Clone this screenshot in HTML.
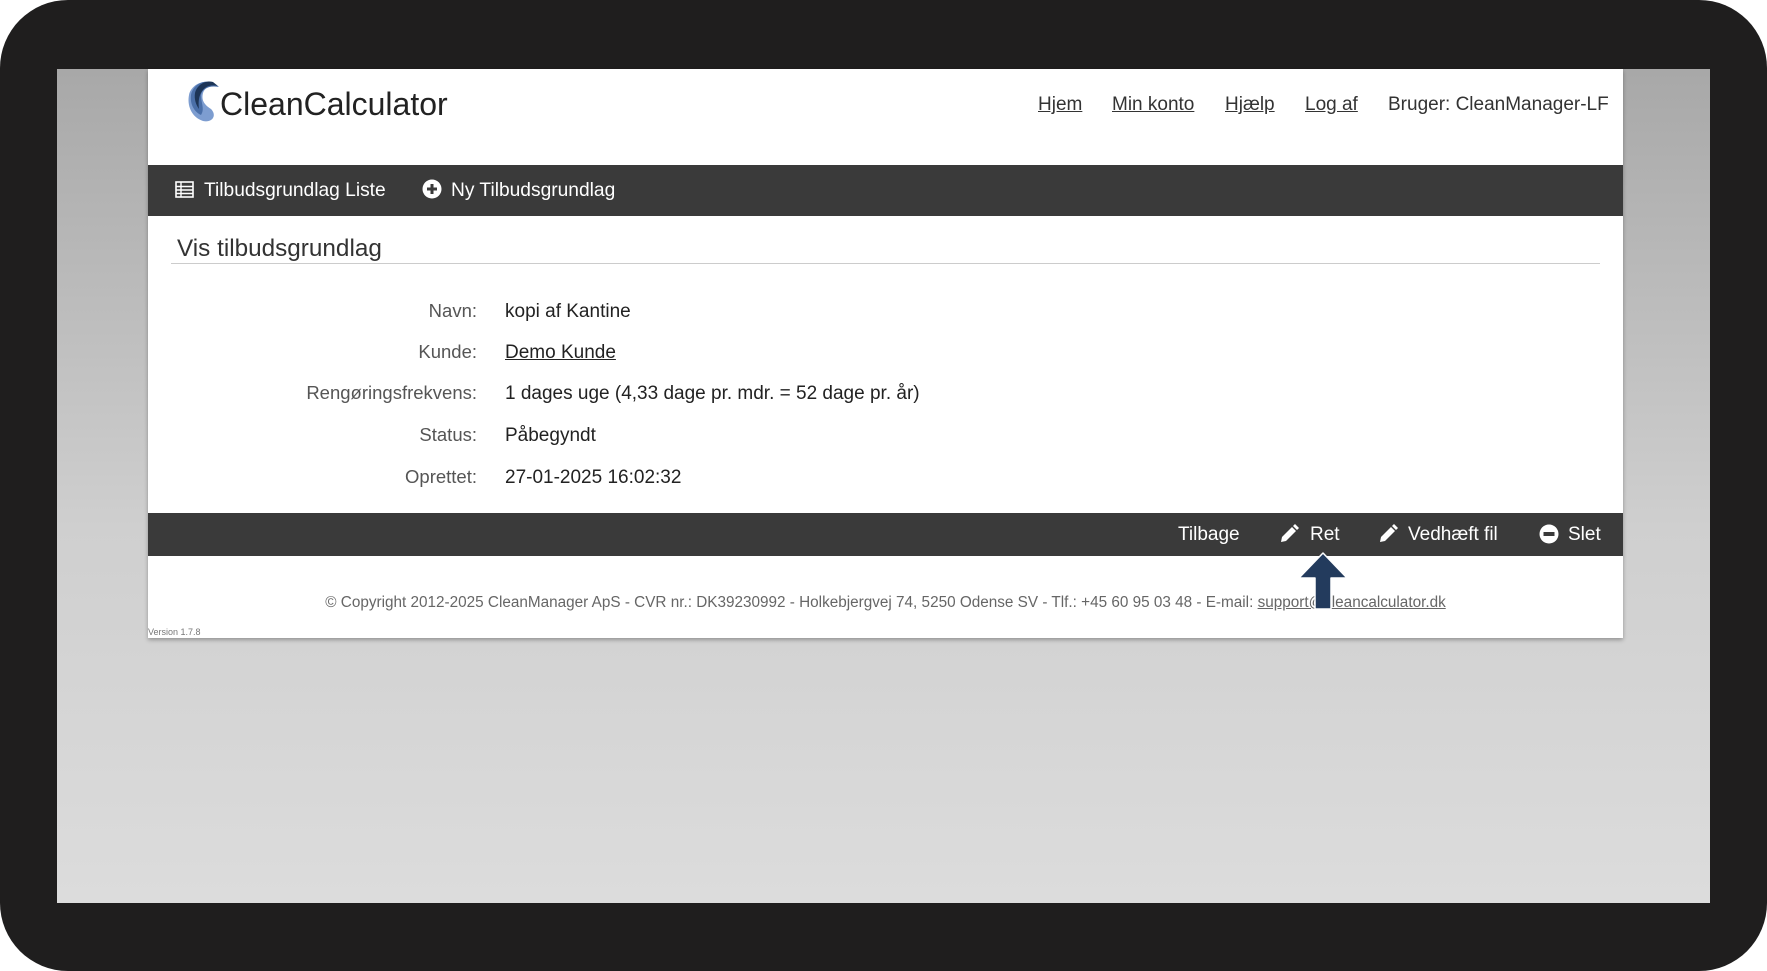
<!DOCTYPE html>
<html><head><meta charset="utf-8"><style>
*{margin:0;padding:0;box-sizing:border-box}
body{width:1767px;height:971px;background:#fff;font-family:"Liberation Sans",sans-serif;position:relative;overflow:hidden}
.frame{position:absolute;left:0;top:0;width:1767px;height:971px;background:#1f1e1e;border-radius:68px}
.gray{position:absolute;left:57px;top:69px;width:1653px;height:834px;background:linear-gradient(#a8a8a8,#cfcfcf 55%,#dcdcdc)}
.page{position:absolute;left:148px;top:69px;width:1475px;height:569px;background:#fff;box-shadow:0 2px 4px rgba(0,0,0,.3)}
.t{position:absolute;white-space:nowrap;line-height:1}
.bar{position:absolute;left:0;width:1475px;background:#3a3a3a}
.u{text-decoration:underline;color:inherit}
.l{right:1146px;font-size:18.5px;color:#555}
.v{left:357px;font-size:19px;color:#222}
</style></head><body>
<div class="frame"></div>
<div class="gray"></div>
<div class="page">
  <svg style="position:absolute;left:35px;top:10px" width="40" height="44" viewBox="0 0 40 44">
    <path d="M30 4C20 0 8 6 6 16C4 26 8 38 20 42C30 44 34 36 28 30C22 26 18 22 20 14C22 8 28 6 36 8Z" fill="#7d9dd0"/>
    <path d="M30 4C20 0 10 6 8 16C7 24 10 32 18 36C22 30 18 24 18 16C19 10 26 6 36 8Z" fill="#4a6fa8"/>
    <path d="M30 3C22 1 14 6 12 14C11 20 13 26 16 30C15 22 16 14 22 9C26 6 31 6 35 7Z" fill="#1d3557"/>
  </svg>
  <div class="t" style="left:72px;top:19px;font-size:32px;color:#222">CleanCalculator</div>
  <div class="t" style="top:26px;left:890px;font-size:19px;color:#333"><span class="u">Hjem</span></div>
  <div class="t" style="top:26px;left:964px;font-size:19px;color:#333"><span class="u">Min konto</span></div>
  <div class="t" style="top:26px;left:1077px;font-size:19px;color:#333"><span class="u">Hjælp</span></div>
  <div class="t" style="top:26px;left:1157px;font-size:19px;color:#333"><span class="u">Log af</span></div>
  <div class="t" style="top:26px;left:1240px;font-size:19px;color:#333">Bruger: CleanManager-LF</div>

  <div class="bar" style="top:96px;height:51px"></div>
  <svg style="position:absolute;left:27px;top:112px" width="19" height="17" viewBox="0 0 19 17"><rect x="1" y="1" width="17" height="15" fill="none" stroke="#fff" stroke-width="1.6"/><path d="M1 5.5H18M1 9H18M1 12.5H18M6 1V16" stroke="#fff" stroke-width="1.4"/></svg>
  <div class="t" style="left:56px;top:112px;font-size:19.2px;color:#fff">Tilbudsgrundlag Liste</div>
  <svg style="position:absolute;left:274px;top:110px" width="20" height="20" viewBox="0 0 20 20"><circle cx="10" cy="10" r="9.5" fill="#fff"/><path d="M10 5V15M5 10H15" stroke="#3a3a3a" stroke-width="3"/></svg>
  <div class="t" style="left:303px;top:112px;font-size:19.2px;color:#fff">Ny Tilbudsgrundlag</div>

  <div class="t" style="left:29px;top:168px;font-size:24.3px;color:#333">Vis tilbudsgrundlag</div>
  <div style="position:absolute;left:23px;top:194px;width:1429px;height:1px;background:#ccc"></div>

  <div class="t l" style="top:233px">Navn:</div>
  <div class="t v" style="top:233px">kopi af Kantine</div>
  <div class="t l" style="top:274px">Kunde:</div>
  <div class="t v" style="top:274px"><span class="u">Demo Kunde</span></div>
  <div class="t l" style="top:315px">Rengøringsfrekvens:</div>
  <div class="t v" style="top:315px">1 dages uge (4,33 dage pr. mdr. = 52 dage pr. år)</div>
  <div class="t l" style="top:357px">Status:</div>
  <div class="t v" style="top:357px">Påbegyndt</div>
  <div class="t l" style="top:399px">Oprettet:</div>
  <div class="t v" style="top:399px">27-01-2025 16:02:32</div>

  <div class="bar" style="top:444px;height:43px"></div>
  <div class="t" style="left:1030px;top:456px;font-size:19px;color:#fff">Tilbage</div>
  <svg style="position:absolute;left:1131px;top:455px" width="20" height="20" viewBox="0 0 20 20"><path d="M2 18L3 13L13 3L17 7L7 17Z" fill="#fff"/><path d="M14 2L16 0L20 4L18 6Z" fill="#fff"/></svg>
  <div class="t" style="left:1162px;top:456px;font-size:19px;color:#fff">Ret</div>
  <svg style="position:absolute;left:1230px;top:455px" width="20" height="20" viewBox="0 0 20 20"><path d="M2 18L3 13L13 3L17 7L7 17Z" fill="#fff"/><path d="M14 2L16 0L20 4L18 6Z" fill="#fff"/></svg>
  <div class="t" style="left:1260px;top:456px;font-size:19px;color:#fff">Vedhæft fil</div>
  <svg style="position:absolute;left:1391px;top:455px" width="20" height="20" viewBox="0 0 20 20"><circle cx="10" cy="10" r="9.5" fill="#fff"/><rect x="4.5" y="8" width="11" height="4" fill="#3a3a3a"/></svg>
  <div class="t" style="left:1420px;top:456px;font-size:19px;color:#fff">Slet</div>

  <div class="t" style="left:0;width:1475px;text-align:center;top:526px;font-size:15.3px;color:#666">© Copyright 2012-2025 CleanManager ApS - CVR nr.: DK39230992 - Holkebjergvej 74, 5250 Odense SV - Tlf.: +45 60 95 03 48 - E-mail: <span class="u">support@cleancalculator.dk</span></div>
  <div class="t" style="left:0;top:559px;font-size:9px;color:#777">Version 1.7.8</div>

  <svg style="position:absolute;left:1147px;top:482px" width="56" height="60" viewBox="0 0 56 60"><path d="M28 2L52 27L36 27L36 58L20 58L20 27L4 27Z" fill="#233b5d" stroke="#fff" stroke-width="1.5" stroke-linejoin="round"/></svg>
</div>
</body></html>
